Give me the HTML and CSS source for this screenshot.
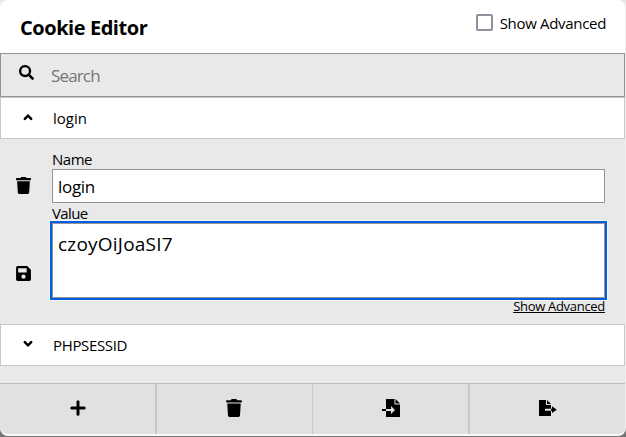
FILE: index.html
```
<!DOCTYPE html>
<html lang="en">
<head>
<meta charset="utf-8">
<title>Cookie Editor</title>
<link rel="stylesheet" href="styles.css">
</head>
<body>
<svg class="symbols" aria-hidden="true">
  <symbol id="trash" viewBox="0 0 448 512"><path d="M432 32H312l-9-19c-4-8-12-13-21-13H167c-9 0-18 5-22 13l-9 19H16C7 32 0 39 0 48v32c0 9 7 16 16 16h416c9 0 16-7 16-16V48c0-9-7-16-16-16zM32 128l21 339c2 25 23 45 48 45h246c25 0 46-20 48-45l21-339z"/></symbol>
</svg>
<main class="popup">
  <header class="header">
    <h1 class="title">Cookie Editor</h1>
    <label class="advanced"><input type="checkbox" class="check"><span>Show Advanced</span></label>
  </header>
  <div class="search">
    <svg class="search-icon" viewBox="0 0 512 512"><path d="M505 443 405 343c-4-4-11-7-17-7h-16a208 208 0 1 0-36 36v16c0 6 3 13 7 17l100 100c9 9 24 9 34 0l28-28c9-10 9-25 0-34zM208 336a128 128 0 1 1 0-256 128 128 0 0 1 0 256z"/></svg>
    <input class="search-input" type="text" placeholder="Search" aria-label="Search">
  </div>
  <section class="cookies">
    <div class="row">
      <svg class="chevron" viewBox="0 0 10 8"><path d="M1.8 5.8 5 2.7l3.2 3.1"/></svg>
      <span class="login-label">login</span>
    </div>
    <div class="details">
      <div class="actions">
        <svg class="delete"><use href="#trash"/></svg>
        <svg class="save" viewBox="0 0 448 512"><path fill-rule="evenodd" d="m434 130-84-84c-9-9-21-14-34-14H48C22 32 0 54 0 80v352c0 27 22 48 48 48h352c27 0 48-21 48-48V164c0-13-5-25-14-34zM224 416a64 64 0 1 1 0-128 64 64 0 0 1 0 128zm96-304v100c0 7-5 12-12 12H76c-7 0-12-5-12-12V108c0-7 5-12 12-12h228c9 0 16 7 16 16z"/></svg>
      </div>
      <form class="fields">
        <label class="label name-label" for="name">Name</label>
        <input class="input" id="name" type="text" value="login">
        <label class="label value-label" for="value">Value</label>
        <textarea class="textarea" id="value" spellcheck="false">czoyOiJoaSI7</textarea>
        <a class="more">Show Advanced</a>
      </form>
    </div>
    <div class="row">
      <svg class="chevron" viewBox="0 0 10 8"><path d="M1.8 2.2 5 5.3l3.2-3.1"/></svg>
      <span class="session-label">PHPSESSID</span>
    </div>
  </section>
  <footer class="toolbar">
    <div class="tool"><svg class="plus" viewBox="0 0 16 16"><path d="M8 1.8v12.4M1.8 8h12.4"/></svg></div>
    <div class="tool"><svg class="bin"><use href="#trash"/></svg></div>
    <div class="tool"><svg class="import" viewBox="0 0 18 18"><path d="M4 0h8.5v5.5H18V18H4zM13.5 0 18 4.5h-4.5z"/><path d="M4 10h5V7l4 4-4 4v-3H4z" class="import-arrow"/><path d="M0 10h4v2H0z"/></svg></div>
    <div class="tool"><svg class="export" viewBox="0 0 18 16"><path d="M0 0h7v5h5v3.7H6v2.1h6V16H0zM8 0l4 4H8zM12 8.7h1V6.3l4.8 3.4-4.8 3.4v-2.3h-1z"/></svg></div>
  </footer>
</main>
</body>
</html>
```
FILE: styles.css
```
* { box-sizing: border-box; }
body {
  margin: 0;
  height: 100vh;
  background: linear-gradient(#e9e9ec 50%, #747474 50%);
  font-family: "Open Sans", "Noto Sans", sans-serif;
  color: #000;
}
.symbols { display: none; }
svg { display: block; flex: none; }
.popup {
  height: 436px;
  display: flex;
  flex-direction: column;
  overflow: hidden;
  background: #e9e9e9;
  border-right: 1px solid #f0f0f0;
  border-bottom: 2px solid #fafafa;
  border-radius: 8px;
}
.header {
  height: 53px;
  display: flex;
  justify-content: space-between;
  padding: 0 19px 0 20px;
  background: #fff;
}
.title { margin: 14px 0 0; font-size: 20px; line-height: 28px; font-weight: 700; letter-spacing: -0.45px; white-space: nowrap; }
.advanced { display: flex; height: 20px; margin-top: 14px; gap: 7px; font-size: 15px; line-height: 19px; letter-spacing: -0.32px; white-space: nowrap; }
.check { appearance: none; width: 17px; height: 17px; margin: 0; border: 2px solid #8f8f9d; border-radius: 2px; background: #fff; }
.search { height: 44px; display: flex; border: 1px solid #949494; padding-left: 18px; }
.search-icon { width: 15px; height: 15px; margin-top: 11px; }
.search-input { width: 400px; height: 42px; margin-left: 17px; padding: 1px 0 0; border: 0; background: none; outline: none; font: 17px "Open Sans", sans-serif; letter-spacing: -0.85px; }
.search-input::placeholder { color: #757575; opacity: 1; }
.row { height: 42px; display: flex; background: #fff; border: 1px solid #c8c8c8; padding-left: 22px; font-size: 15px; line-height: 41px; }
.chevron { width: 10px; height: 8px; margin: 15px 20px 0 0; fill: none; stroke: #000; stroke-width: 2.5; stroke-linecap: round; }
.login-label { letter-spacing: 0; }
.session-label { letter-spacing: -0.35px; }
.details { height: 185px; display: flex; }
.actions { width: 52px; padding: 38px 0 0 16px; }
.delete { width: 15px; height: 17px; }
.save { width: 15px; height: 17px; margin-top: 71px; }
.fields { width: 553px; display: flex; flex-direction: column; }
.label { font-size: 15px; line-height: 19px; letter-spacing: -0.5px; }
.name-label { margin-top: 11px; height: 19px; }
.value-label { height: 20px; letter-spacing: -0.6px; line-height: 20px; }
.input { height: 34px; border: 1px solid #949494; padding: 0 5px; font: 17px "Open Sans", sans-serif; border-radius: 0; outline: none; letter-spacing: -0.3px; }
.textarea { height: 75px; border: 1px solid #949494; padding: 7px 5px; font: 19px/26px "Open Sans", sans-serif; letter-spacing: 0.22px; resize: none; border-radius: 0; outline: 2px solid #0060df; box-shadow: 0 0 0 3px #f5f5f5; overflow: hidden; }
.more { align-self: flex-end; font-size: 13px; line-height: 17px; letter-spacing: -0.3px; text-decoration: underline; text-underline-offset: 1px; }
.toolbar { height: 51px; margin-top: auto; display: grid; grid-template-columns: 157px 156px 157px 155px; border-top: 1px solid #bcbcbc; background: #e1e1e1; }
.tool { display: flex; justify-content: center; align-items: flex-start; border-right: 1px solid #c8c8c8; }
.tool:nth-child(odd) { border-right-width: 2px; }
.tool:last-child { border: 0; }
.plus { width: 16px; height: 16px; margin-top: 16px; stroke: #000; stroke-width: 3; stroke-linecap: round; }
.bin { width: 16px; height: 18px; margin: 15px 2px 0 0; }
.import { width: 18px; height: 18px; margin-top: 15px; }
.import-arrow { fill: #e1e1e1; }
.export { width: 18px; height: 16px; margin-top: 16px; }
```
